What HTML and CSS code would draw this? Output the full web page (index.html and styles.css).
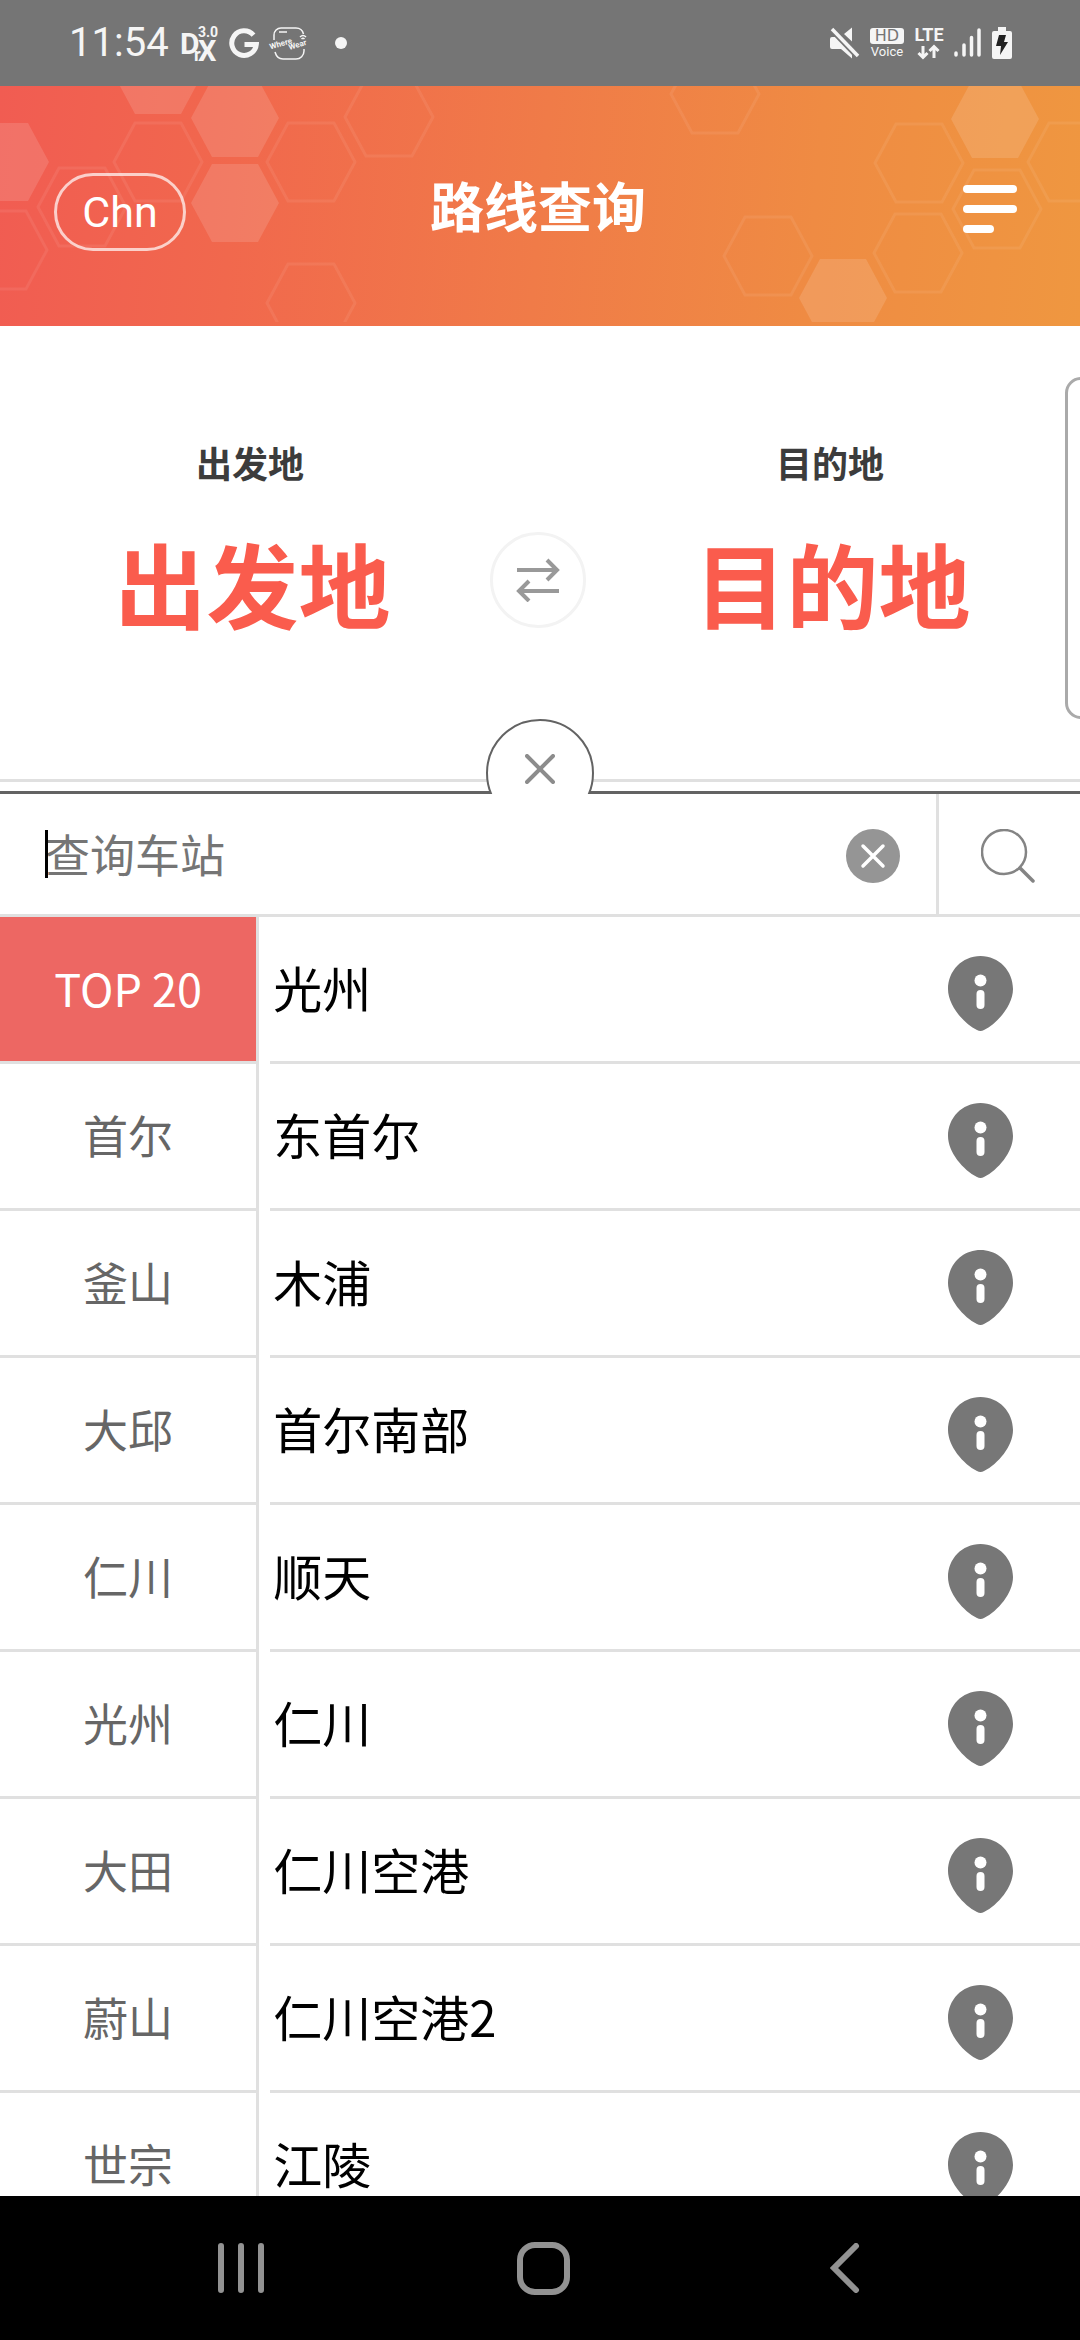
FILE: index.html
```html
<!DOCTYPE html>
<html lang="zh-CN">
<head>
    <meta charset="UTF-8">
    <meta name="viewport" content="width=device-width, initial-scale=1.0">
    <title>路线查询</title>
    <link rel="stylesheet" href="styles.css">
</head>
<body>
    <!-- 状态栏 -->
    <div class="status-bar">
        <div class="status-left">
            <span class="clock">11:54</span>
            <svg class="icon-drx" width="36" height="38" viewBox="0 0 36 38">
                <text font-size="30"><tspan x="-1" y="30">D</tspan><tspan x="13" y="37" font-size="18">r</tspan><tspan x="17" y="37" font-size="29">X</tspan><tspan x="17" y="13" font-size="14">3.0</tspan></text>
            </svg>
            <svg class="icon-g" width="30" height="30" viewBox="0 0 30 30">
                <path d="M24.500 7.200A12.300 12.300 0 1 0 27.300 16.500H15.500" fill="none" stroke="#f5f5f5" stroke-width="5"/>
            </svg>
            <svg class="icon-wear" width="36" height="34" viewBox="0 0 36 34">
                <path d="M3 14V9a7 7 0 0 1 7-7h15q6 0 7.500 6M33 23v2a8 8 0 0 1-8 8H12q-6 0-8-7M8 6h8M29 11q3-3 6 0M30.500 13q1.500-1.500 3 0" fill="none" stroke="#f5f5f5" stroke-width="1.500"/>
                <text x="-1" y="18" font-size="8" transform="rotate(-17 18 19)">Where<tspan x="17" y="24">Wear</tspan></text>
            </svg>
            <span class="dot"></span>
        </div>
        <div class="status-right">
            <svg width="30" height="32" viewBox="0 0 30 32" fill="#f5f5f5">
                <path d="M2 10h5l15 15v6.500L11 22H2q-2 0-2-2v-8q0-2 2-2zM22 .5v14L14 7z"/>
                <path d="M2 2l26 27" stroke="#757575" stroke-width="7"/>
                <path d="M2 2l26 27" stroke="#f5f5f5" stroke-width="3.500"/>
            </svg>
            <svg class="icon-hd" width="34" height="32" viewBox="0 0 34 32">
                <rect x="0" y="1" width="34" height="16" rx="3" fill="#f5f5f5"/>
                <text class="hd" x="17" y="14" font-size="16">HD</text>
                <text x="17" y="29" font-size="13">Voice</text>
            </svg>
            <svg class="icon-lte" width="30" height="34" viewBox="0 0 30 34">
                <text x="15" y="15" font-size="18">LTE</text>
                <path d="M9 20v12M4.500 27L9 31.500 13.500 27M20 32V20M15.500 25L20 20.500 24.500 25" fill="none" stroke="#f5f5f5" stroke-width="3"/>
            </svg>
            <svg width="28" height="30" viewBox="0 0 28 30" stroke="#f5f5f5" stroke-width="3.500" stroke-linecap="round">
                <path d="M2 25v2M10 17v10M17.500 9.500V27M25 2v25"/>
            </svg>
            <svg width="20" height="32" viewBox="0 0 20 32">
                <path d="M6 0h8v4h4q2 0 2 2v24q0 2-2 2H2q-2 0-2-2V6q0-2 2-2h4z" fill="#f5f5f5"/>
                <path d="M7 8h7l-2 7h4L8 28l1-9H4z" fill="#222"/>
            </svg>
        </div>
    </div>

    <header class="header">
        <!-- 六边形背景 -->
        <svg class="hexagons" viewBox="0 0 1080 236" preserveAspectRatio="none">
            <defs>
                <polygon id="hex" points="-44,0 -23,-39 23,-39 44,0 23,39 -23,39"/>
            </defs>
            <g class="hex-fill">
                <use href="#hex" x="158" y="-11"/>
                <use href="#hex" x="235" y="32"/>
                <use href="#hex" x="235" y="117"/>
                <use href="#hex" x="5" y="76"/>
                <use href="#hex" x="995" y="33"/>
                <use href="#hex" x="843" y="212"/>
            </g>
            <g class="hex-line">
                <use href="#hex" x="158" y="76"/>
                <use href="#hex" x="82" y="121"/>
                <use href="#hex" x="3" y="164"/>
                <use href="#hex" x="311" y="76"/>
                <use href="#hex" x="389" y="31"/>
                <use href="#hex" x="311" y="217"/>
                <use href="#hex" x="715" y="8"/>
                <use href="#hex" x="919" y="77"/>
                <use href="#hex" x="918" y="167"/>
                <use href="#hex" x="768" y="170"/>
                <use href="#hex" x="997" y="123"/>
                <use href="#hex" x="1072" y="76"/>
            </g>
        </svg>
        <button class="lang" type="button">Chn</button>
        <h1>路线查询</h1>
        <button class="menu" type="button" aria-label="菜单">
            <span></span>
            <span></span>
            <span></span>
        </button>
    </header>

    <section class="carousel">
        <div class="route">
            <div class="place">
                <span class="place-label">出发地</span>
                <button class="place-name" type="button">出发地</button>
            </div>
            <button class="swap" type="button" aria-label="交换">
                <svg width="44" height="44" viewBox="0 0 44 44" fill="none" stroke="#999" stroke-width="4">
                    <path d="M1 12h40M31 2l10 10-10 10M43 33H3M13 23L3 33l10 10"/>
                </svg>
            </button>
            <div class="place">
                <span class="place-label">目的地</span>
                <button class="place-name" type="button">目的地</button>
            </div>
        </div>
        <div class="next-card"></div>
    </section>

    <main class="panel">
        <div class="close-tab">
            <button type="button" aria-label="关闭">
                <svg width="30" height="30" viewBox="0 0 30 30" stroke="#8c8c8c" stroke-width="4" stroke-linecap="round">
                    <path d="M2 2l26 26M28 2L2 28"/>
                </svg>
            </button>
        </div>

        <form class="search">
            <div class="search-field">
                <input type="text" placeholder="查询车站" aria-label="查询车站">
                <button class="clear" type="reset" aria-label="清除">
                    <svg width="54" height="54" viewBox="0 0 54 54">
                        <circle cx="27" cy="27" r="27" fill="#959595"/>
                        <path d="M17 17l20 20M37 17L17 37" stroke="#fff" stroke-width="3.500" stroke-linecap="round"/>
                    </svg>
                </button>
            </div>
            <button class="search-button" type="button" aria-label="查询">
                <svg width="54" height="54" viewBox="0 0 54 54" fill="none" stroke="#848484">
                    <circle cx="23" cy="23" r="22" stroke-width="2.500"/>
                    <path d="M39 39l13 13" stroke-width="3.500" stroke-linecap="round"/>
                </svg>
            </button>
        </form>

        <div class="lists">
            <nav class="regions">
                <button class="active" type="button">TOP 20</button>
                <button type="button">首尔</button>
                <button type="button">釜山</button>
                <button type="button">大邱</button>
                <button type="button">仁川</button>
                <button type="button">光州</button>
                <button type="button">大田</button>
                <button type="button">蔚山</button>
                <button type="button">世宗</button>
            </nav>
            <ul class="stations" id="stations"></ul>
        </div>
    </main>

    <!-- 系统导航键 -->
    <nav class="nav-bar">
        <button type="button" aria-label="最近">
            <svg width="48" height="50" viewBox="0 0 48 50" stroke="#929292" stroke-width="6" stroke-linecap="round">
                <path d="M4 3v44M24 3v44M44 3v44"/>
            </svg>
        </button>
        <button type="button" aria-label="主页">
            <svg width="53" height="53" viewBox="0 0 53 53">
                <rect x="3" y="3" width="47" height="47" rx="15" fill="none" stroke="#929292" stroke-width="6"/>
            </svg>
        </button>
        <button type="button" aria-label="返回">
            <svg width="30" height="50" viewBox="0 0 30 50" fill="none" stroke="#929292" stroke-width="6" stroke-linecap="round">
                <path d="M26 3L4 25l22 22"/>
            </svg>
        </button>
    </nav>

    <script>
        const stations = ['光州', '东首尔', '木浦', '首尔南部', '顺天', '仁川', '仁川空港', '仁川空港2', '江陵'];
        const list = document.getElementById('stations');

        stations.forEach(name => {
            const item = document.createElement('li');
            item.innerHTML = `
                <button class="station-name" type="button">${name}</button>
                <button class="info" type="button" aria-label="${name} 信息">
                    <svg width="65" height="75" viewBox="0 0 65 75">
                        <path d="M32.500 0C51 0 65 15 65 33c0 16-15 34-29 41q-3.500 2-7 0C15 67 0 49 0 33 0 15 14 0 32.500 0z" fill="#777"/>
                        <circle cx="32.500" cy="24.500" r="6" fill="#fff"/>
                        <rect x="28.500" y="34" width="8" height="19" rx="4" fill="#fff"/>
                    </svg>
                </button>`;
            list.appendChild(item);
        });
    </script>
</body>
</html>
```
FILE: styles.css
```css
* {
    box-sizing: border-box;
}

html, body {
    height: 100%;
}

body {
    display: flex;
    flex-direction: column;
    margin: 0;
    overflow: hidden;
    background-color: #fff;
    font-family: "Noto Sans CJK SC", sans-serif;
}

button {
    padding: 0;
    border: none;
    background: none;
    color: inherit;
    font-family: inherit;
    cursor: pointer;
}

svg {
    display: block;
}

/* 状态栏 */
.status-bar {
    flex: none;
    display: flex;
    align-items: center;
    justify-content: space-between;
    height: 86px;
    padding: 0 68px 0 69px;
    background-color: #757575;
    color: #f5f5f5;
    font-family: Roboto, sans-serif;
}

.status-left, .status-right {
    display: flex;
    align-items: center;
    gap: 12px;
}

.status-right {
    gap: 10px;
}

.clock {
    font-size: 40px;
    line-height: 48px;
}

.icon-drx, .icon-wear, .icon-hd, .icon-lte {
    overflow: visible;
    fill: #f5f5f5;
    font-weight: bold;
}

.icon-hd, .icon-lte {
    text-anchor: middle;
}

.icon-hd {
    font-weight: normal;
}

.icon-hd .hd {
    fill: #757575;
    font-family: "DejaVu Sans", sans-serif;
}

.dot {
    width: 12px;
    height: 12px;
    margin-left: 16px;
    border-radius: 50%;
    background-color: #f5f5f5;
}

/* 标题栏 */
.header {
    position: relative;
    flex: none;
    display: grid;
    grid-template-columns: 1fr auto 1fr;
    align-items: center;
    height: 240px;
    padding: 0 63px 0 54px;
    background: linear-gradient(95deg, #f15c52, #f1684d 22%, #f07b48 50%, #ef8b43 75%, #ef9740);
    color: #fff;
}

.hexagons {
    position: absolute;
    top: 0;
    left: 0;
    width: 100%;
    height: 236px;
}

.hex-fill {
    fill: rgba(255, 255, 255, 0.13);
}

.hex-line {
    fill: none;
    stroke: rgba(255, 255, 255, 0.07);
    stroke-width: 3px;
}

.lang, .menu, .header h1 {
    position: relative;
}

.lang {
    width: 132px;
    height: 78px;
    margin-top: 12px;
    border: 3px solid rgba(255, 255, 255, 0.7);
    border-radius: 39px;
    font-family: Roboto, sans-serif;
    font-size: 43px;
}

.header h1 {
    margin: 0;
    padding: 0 0 3px 5px;
    font-size: 54px;
    line-height: 80px;
}

.menu {
    justify-self: end;
    display: flex;
    flex-direction: column;
    gap: 12px;
    width: 54px;
    margin-top: 6px;
}

.menu span {
    height: 8px;
    border-radius: 4px;
    background-color: #fff;
}

.menu span:last-child {
    width: 31px;
}

/* 出发地 / 目的地 */
.carousel {
    flex: none;
    display: flex;
    overflow: hidden;
    border-bottom: 3px solid #e0e0e0;
}

.route {
    flex: 0 0 100%;
    display: grid;
    grid-template-columns: 1fr 80px 1fr;
    justify-items: center;
    padding: 109px 0 137px;
}

.place {
    display: flex;
    flex-direction: column;
    align-items: center;
    gap: 33px;
}

.place-label {
    color: #3c3c3c;
    font-size: 36px;
    font-weight: bold;
    line-height: 54px;
}

.place-name {
    padding-left: 5px;
    color: #fa5c4d;
    font-size: 92px;
    font-weight: bold;
    line-height: 120px;
}

.swap {
    display: flex;
    align-items: center;
    justify-content: center;
    width: 96px;
    height: 96px;
    margin: 97px -6px 0 -10px;
    border: 3px solid #f3f3f3;
    border-radius: 50%;
}

.next-card {
    flex: 0 0 100%;
    margin: 51px 0 60px -15px;
    border: 3px solid #aaa;
    border-radius: 16px;
    background-color: #fff;
}

/* 车站查询 */
.panel {
    position: relative;
    flex: 1;
    display: flex;
    flex-direction: column;
    min-height: 0;
    margin-top: 9px;
    border-top: 3px solid #636363;
}

.close-tab {
    position: absolute;
    top: -75px;
    left: calc(50% - 54px);
    width: 108px;
    height: 75px;
    overflow: hidden;
}

.close-tab button {
    display: flex;
    justify-content: center;
    width: 108px;
    height: 108px;
    padding-top: 33px;
    border: 2px solid #636363;
    border-radius: 50%;
    background-color: #fff;
}

.search {
    flex: none;
    display: flex;
    height: 123px;
    border-bottom: 3px solid #e0e0e0;
}

.search-field {
    position: relative;
    flex: 1;
    display: flex;
    align-items: center;
    padding: 0 36px 0 45px;
    border-right: 3px solid #e0e0e0;
}

/* 光标 */
.search-field::before {
    content: "";
    position: absolute;
    left: 45px;
    width: 3px;
    height: 48px;
    background-color: #000;
}

.search-field input {
    flex: 1;
    min-width: 0;
    padding: 0;
    border: none;
    outline: none;
    background: none;
    font-family: inherit;
    font-size: 45px;
    line-height: 66px;
}

.search-field input::placeholder {
    color: #757575;
}

.clear {
    margin-top: 4px;
}

.search-button {
    display: flex;
    align-items: center;
    justify-content: center;
    width: 141px;
    padding: 4px 3px 0 0;
}

.lists {
    flex: 1;
    display: flex;
    min-height: 0;
    overflow: hidden;
}

.regions {
    flex: none;
    width: 24%;
    height: max-content;
    border-right: 3px solid #e0e0e0;
}

.regions button {
    display: block;
    width: 100%;
    height: 147px;
    padding-bottom: 4px;
    border-bottom: 3px solid #e0e0e0;
    color: #666;
    font-size: 45px;
}

.regions .active {
    background-color: #ed6763;
    color: #fff;
}

.stations {
    flex: 1;
    margin: 0;
    padding: 0 0 0 11px;
    list-style: none;
}

.stations li {
    display: flex;
    align-items: center;
    height: 147px;
    padding-right: 67px;
    border-bottom: 3px solid #e0e0e0;
}

.station-name {
    flex: 1;
    padding: 0 0 4px 3px;
    color: #000;
    font-size: 49px;
    line-height: 72px;
    text-align: left;
}

.info {
    margin-top: 9px;
}

/* 导航键 */
.nav-bar {
    flex: none;
    display: grid;
    grid-template-columns: repeat(3, 1fr);
    height: 144px;
    padding: 0 84px 0 90px;
    background-color: #000;
}

.nav-bar button {
    display: flex;
    align-items: center;
    justify-content: center;
}
```
